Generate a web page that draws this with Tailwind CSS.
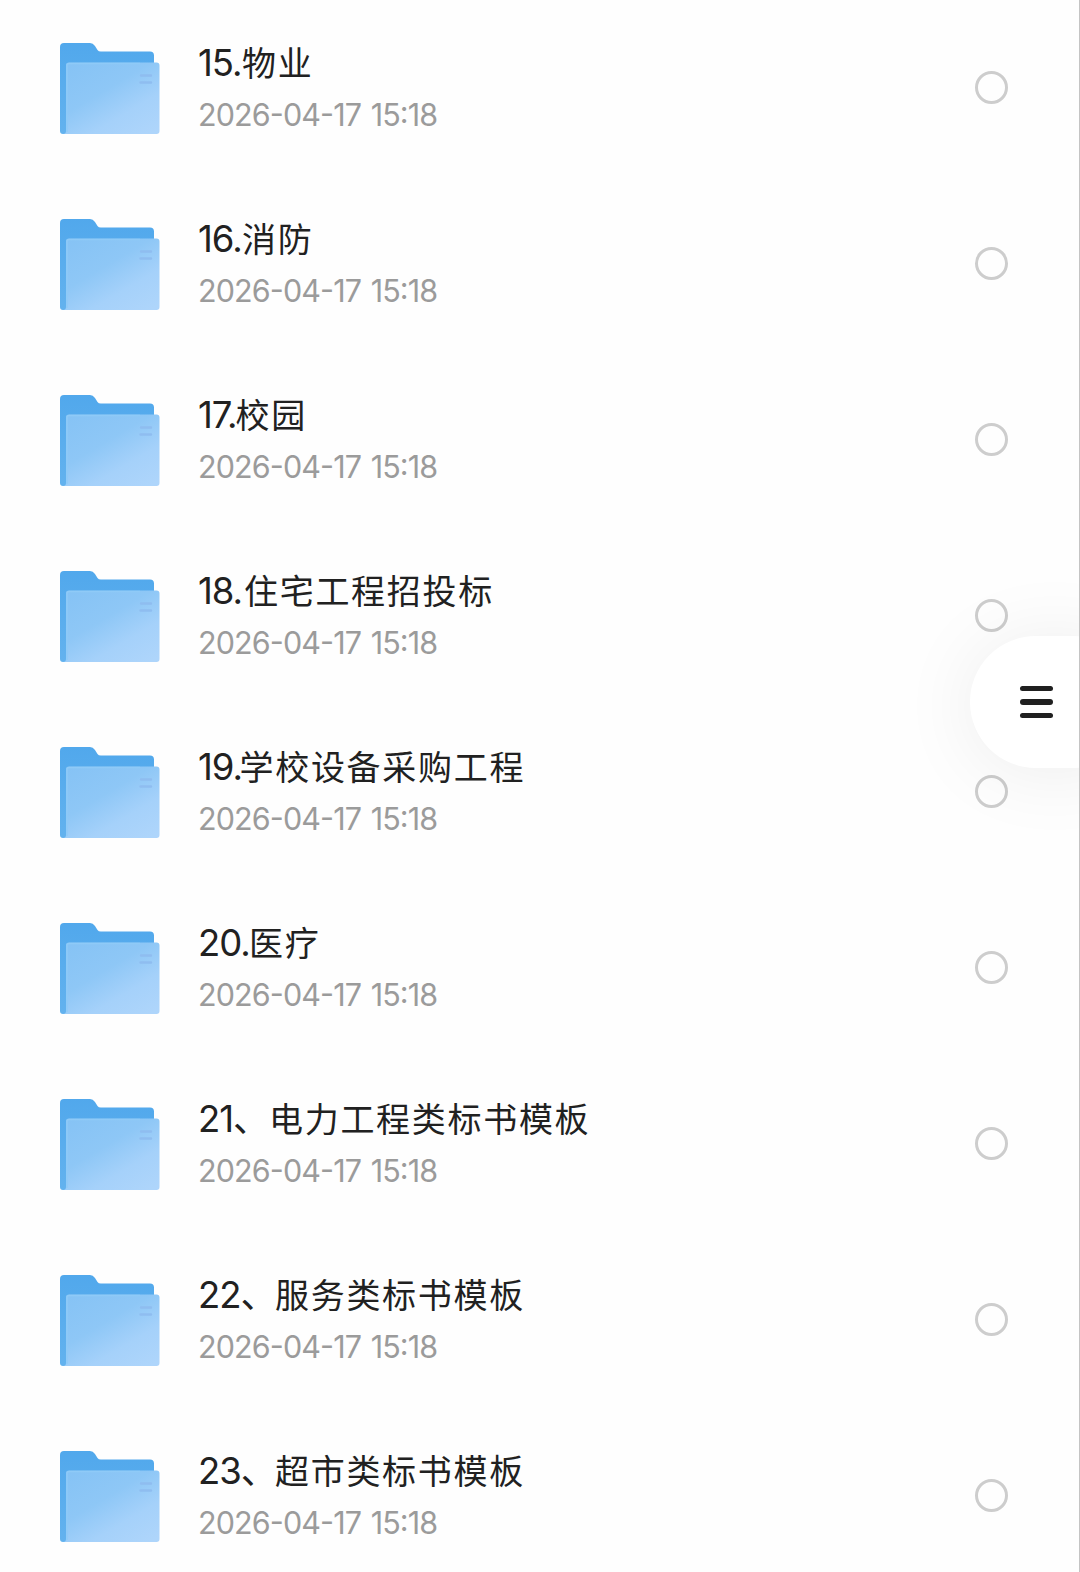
<!DOCTYPE html>
<html lang="zh-CN">
<head>
<meta charset="utf-8">
<title>文件列表</title>
<script src="https://cdn.jsdelivr.net/npm/@tailwindcss/browser@4"></script>
</head>
<body class="bg-white">
<svg class="absolute w-0 h-0">
  <defs>
    <linearGradient id="front" x1="0.1" y1="0" x2="0.9" y2="1">
      <stop offset="0" stop-color="#86c3f5"/><stop offset="0.4" stop-color="#8ec7f6"/><stop offset="0.7" stop-color="#a5d1fa"/><stop offset="1" stop-color="#aed5fb"/>
    </linearGradient>
    <linearGradient id="back" x1="0" y1="0" x2="0" y2="1">
      <stop offset="0" stop-color="#51a8ec"/><stop offset="1" stop-color="#63b2ee"/>
    </linearGradient>
  </defs>
</svg>
<div class="relative w-[1080px] h-[1572px] overflow-hidden bg-[#fefefe] border-r border-[#c4c4c4] font-['Inter','Noto_Sans_CJK_SC',sans-serif]">
  <main id="list" class="flex flex-col pl-[60px] pr-[71px]"></main>
  <button class="absolute left-[970px] top-[636px] w-[170px] h-[132px] rounded-full bg-white shadow-[0_4px_80px_rgba(0,0,0,0.07)] flex flex-col justify-center gap-[8px] pl-[49.5px]" aria-label="菜单">
    <span class="block w-[33px] h-[5.6px] rounded-full bg-[#202020]"></span>
    <span class="block w-[33px] h-[5.6px] rounded-full bg-[#202020]"></span>
    <span class="block w-[33px] h-[5.6px] rounded-full bg-[#202020]"></span>
  </button>
</div>
<script>
  // prefix, name, width of the prefix in px
  const folders = [
    ['15.', '物业', 44], ['16.', '消防', 44], ['17.', '校园', 37.5],
    ['18.', '住宅工程招投标', 46], ['19.', '学校设备采购工程', 41.5], ['20.', '医疗', 51],
    ['21、', '电力工程类标书模板', 71], ['22、', '服务类标书模板', 77], ['23、', '超市类标书模板', 77],
  ];
  document.getElementById('list').innerHTML = folders.map(([no, name, w]) => `
    <div class="flex items-center h-[176px] shrink-0">
      <svg class="w-[100px] h-[92px] mt-[2px] shrink-0" viewBox="0 0 100 92">
        <path d="M0 4Q0 0 4 0H30Q33 0 35 3L37.500 7Q38.500 8.500 41 8.500H90Q94 8.500 94 12.500V91H3Q0 91 0 88Z" fill="url(#back)"/>
        <path d="M6 22.500Q6 19.500 9 19.500H96.500Q99.500 19.500 99.500 22.500V88Q99.500 91 96.500 91H3Q6 91 6 88Z" fill="url(#front)"/>
        <path d="M7 89V22Q7 20.500 9 20.500H80" fill="none" stroke="#8fcaf7" stroke-width="1.500"/>
        <path d="M81 32.500H91M80.500 39.500H91" stroke="#8fbdf0" stroke-width="2.400" stroke-linecap="round"/>
      </svg>
      <div class="ml-[38px] flex flex-col grow">
        <div class="flex items-baseline h-[52px] leading-[50px] text-[34px] tracking-[1.7px] text-[#212121] whitespace-nowrap"><span class="text-[36.5px] font-normal tracking-[-1px]" style="width:${w}px">${no}</span><span>${name}</span></div>
        <div class="h-[48px] leading-[50px] text-[30.5px] font-normal tracking-[-0.9px] [word-spacing:2px] text-[#9b9b9b] whitespace-nowrap [font-feature-settings:'case']">2026-04-17 15:18</div>
      </div>
      <span class="block w-[33px] h-[33px] -mt-px rounded-full border-[3px] border-[#cdcdcd]"></span>
    </div>`).join('');
</script>
</body>
</html>
